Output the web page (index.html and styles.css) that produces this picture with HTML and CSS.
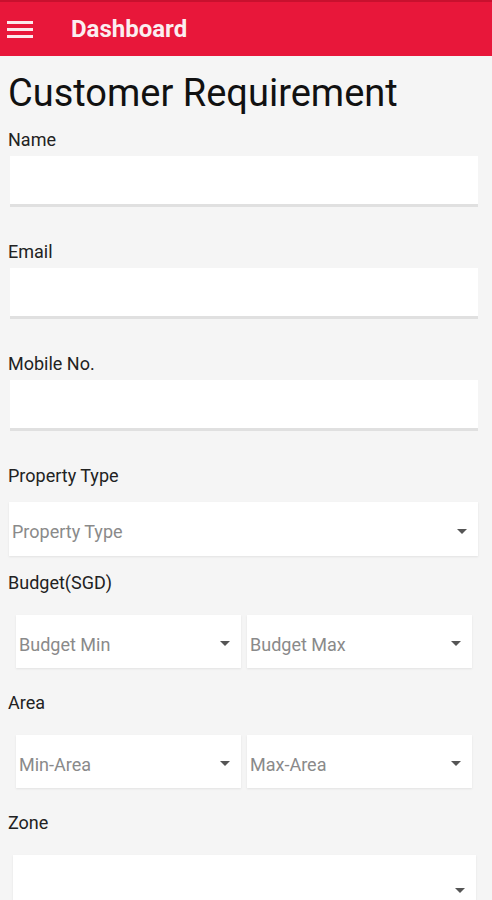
FILE: index.html
```html
<!DOCTYPE html>
<html lang="en">
<head>
    <meta charset="UTF-8">
    <meta name="viewport" content="width=device-width, initial-scale=1.0">
    <title>Customer Requirement</title>
    <link rel="stylesheet" href="styles.css">
</head>
<body>
    <header class="topbar">
        <div class="menu-icon">
            <span></span>
            <span></span>
            <span></span>
        </div>
        <div class="topbar-title">Dashboard</div>
    </header>

    <main class="page">
        <h1 class="page-title">Customer Requirement</h1>

        <label class="field-label">Name</label>
        <input type="text" class="text-input">

        <label class="field-label gap-lg">Email</label>
        <input type="text" class="text-input">

        <label class="field-label gap-lg">Mobile No.</label>
        <input type="text" class="text-input">

        <label class="field-label gap-lg">Property Type</label>
        <div class="select select-full">
            <span class="placeholder">Property Type</span>
            <span class="caret"></span>
        </div>

        <label class="field-label gap-sm">Budget(SGD)</label>
        <div class="select-row">
            <div class="select select-half">
                <span class="placeholder">Budget Min</span>
                <span class="caret"></span>
            </div>
            <div class="select select-half">
                <span class="placeholder">Budget Max</span>
                <span class="caret"></span>
            </div>
        </div>

        <label class="field-label gap-md">Area</label>
        <div class="select-row">
            <div class="select select-half">
                <span class="placeholder">Min-Area</span>
                <span class="caret"></span>
            </div>
            <div class="select select-half">
                <span class="placeholder">Max-Area</span>
                <span class="caret"></span>
            </div>
        </div>

        <label class="field-label gap-md">Zone</label>
        <div class="select select-zone">
            <span class="placeholder"></span>
            <span class="caret"></span>
        </div>
    </main>
</body>
</html>
```

FILE: styles.css
```css
body {
    margin: 0;
    font-family: Roboto, "Liberation Sans", sans-serif;
    background-color: #f5f5f5;
    color: #222;
}
.topbar {
    height: 54px;
    border-top: 2px solid #c8102e;
    background: #e8173a;
    display: flex;
    align-items: center;
    color: #fff;
}
.menu-icon {
    width: 26px;
    margin-left: 7px;
    display: flex;
    flex-direction: column;
    gap: 4px;
}
.menu-icon span {
    height: 3px;
    background: #fbe9ec;
}
.topbar-title {
    margin-left: 38px;
    font-size: 24px;
    font-weight: bold;
    color: #fbeef0;
}
.page {
    padding: 0 8px;
    display: flex;
    flex-direction: column;
    align-items: flex-start;
}
.page-title {
    margin: 15px 0 0 0;
    font-size: 38px;
    line-height: 44px;
    font-weight: normal;
    color: #111;
}
.field-label {
    display: block;
    margin-top: 15px;
    font-size: 18px;
    line-height: 20px;
    color: #222;
}
.gap-lg {
    margin-top: 35px;
}
.gap-sm {
    margin-top: 17px;
}
.gap-md {
    margin-top: 25px;
}
.text-input {
    box-sizing: border-box;
    width: 468px;
    height: 51px;
    margin: 6px 0 0 2px;
    border: none;
    border-bottom: 3px solid #e0e0e0;
    background: #fff;
    padding: 0;
}
.select {
    box-sizing: border-box;
    display: flex;
    align-items: center;
    justify-content: space-between;
    padding: 4px 11px 0 3px;
    background: #fff;
    box-shadow: 0 1px 2px rgba(0, 0, 0, 0.08);
}
.select-full {
    width: 469px;
    height: 54px;
    margin: 16px 0 0 1px;
}
.select-row {
    display: flex;
    gap: 6px;
    margin: 22px 0 0 8px;
}
.select-half {
    width: 225px;
    height: 53px;
}
.select-zone {
    width: 463px;
    height: 60px;
    margin: 22px 0 0 5px;
    padding-top: 10px;
}
.placeholder {
    font-size: 18px;
    color: #8a8a8a;
    padding-top: 1px;
}
.caret {
    width: 0;
    height: 0;
    border-left: 5px solid transparent;
    border-right: 5px solid transparent;
    border-top: 5px solid #555;
}
```
